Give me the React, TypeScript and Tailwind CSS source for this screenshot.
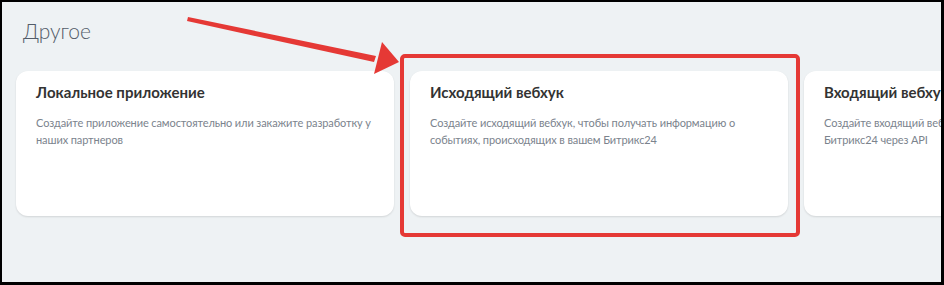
const cards = [
  {
    title: "Локальное приложение",
    text: "Создайте приложение самостоятельно или закажите разработку у наших партнеров",
  },
  {
    title: "Исходящий вебхук",
    text: "Создайте исходящий вебхук, чтобы получать информацию о событиях, происходящих в вашем Битрикс24",
  },
  {
    title: "Входящий вебхук",
    text: "Создайте входящий вебхук, чтобы управлять данными в вашем Битрикс24 через API",
  },
];

const App = () => {
  return (
    <div className="relative w-[944px] h-[285px] overflow-hidden border-t-2 border-l-2 border-r-[3px] border-b-[3px] border-black bg-[#eef2f4] font-['Lato','Open_Sans',sans-serif]">
      <div className="pt-[14px] pl-[14px]">
        <h1 className="ml-[7px] text-[21px] leading-[30px] font-light text-[#535c69]">
          Другое
        </h1>
        <div className="mt-[25px] flex gap-4">
          {cards.map((c) => (
            <div
              key={c.title}
              className="w-[378px] h-[145px] shrink-0 rounded-xl bg-white px-5 pt-[10px] shadow-[0_1px_2px_rgba(0,0,0,0.12)]"
            >
              <h2 className="text-[15px] leading-[22px] font-bold text-[#333]">
                {c.title}
              </h2>
              <p className="mt-[11px] text-[11px] leading-[17px] tracking-[-0.1px] text-[#7b838d]">
                {c.text}
              </p>
            </div>
          ))}
        </div>
      </div>

      {/* annotation: red frame around the second card */}
      <div className="absolute left-[398px] top-[52px] w-[400px] h-[183px] rounded-[5px] border-4 border-[#e53935]" />

      {/* annotation: red arrow */}
      <svg
        className="absolute left-0 top-0"
        width="944"
        height="285"
        viewBox="0 0 944 285"
      >
        <polygon points="186,15 374,54 372,60 185,19" fill="#e53935" />
        <polygon points="380,40 397,60 372,72" fill="#e53935" />
      </svg>
    </div>
  );
};

export default App;
